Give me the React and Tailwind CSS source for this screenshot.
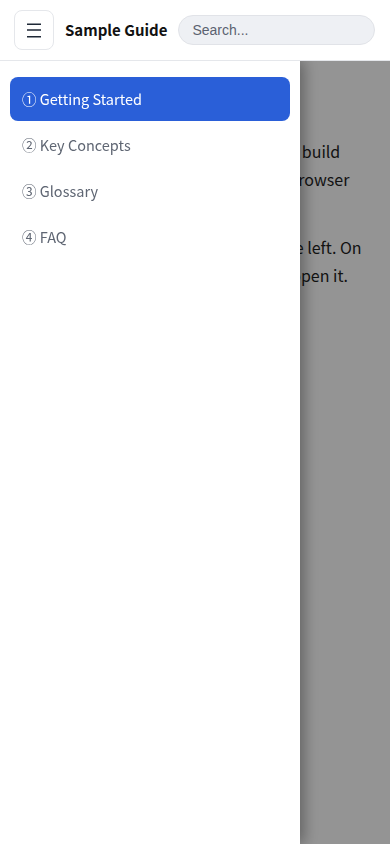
import React from "react";
import { useState } from "react";

const sections = [
  { id: 1, label: "① Getting Started" },
  { id: 2, label: "② Key Concepts" },
  { id: 3, label: "③ Glossary" },
  { id: 4, label: "④ FAQ" },
];

const App = () => {
  const [open, setOpen] = useState(true);
  const [active, setActive] = useState(1);

  return (
    <div className="min-h-[844px] bg-white text-[#1f1f1f] font-['Noto_Sans_CJK_SC',sans-serif]">
      <header className="relative z-30 flex h-[61px] items-center gap-[11px] border-b border-[#e5e7eb] bg-white pl-[14px] pr-[15px]">
        <button
          onClick={() => setOpen(!open)}
          className="flex h-10 w-10 shrink-0 items-center justify-center rounded-lg border border-[#e5e7eb] bg-white"
        >
          <svg width="16" height="16" viewBox="0 0 16 16" fill="none">
            <path d="M1 2.3h14M1 8h14M1 14.7h14" stroke="#1f2937" strokeWidth="1.4" />
          </svg>
        </button>
        <h1 className="shrink-0 text-[15px] font-bold text-[#111]">Sample Guide</h1>
        <input
          type="text"
          placeholder="Search..."
          className="h-[30px] min-w-0 flex-1 rounded-full border border-[#e1e3e8] bg-[#eef0f4] px-[13px] font-['Liberation_Sans',sans-serif] text-sm text-[#333] placeholder:text-[#5b6270] outline-none"
        />
      </header>

      <main className="px-6 pt-7">
        <h2 className="mb-4 text-2xl font-bold leading-8">Getting Started</h2>
        <p className="mb-3 text-base leading-7">
          This guide covers what you'll need to build simple docs that work well in every browser without extra setup.
        </p>
        <p className="text-base leading-7">
          Select a topic in the navigation on the left. On small screens, tap the top button to open it.
        </p>
      </main>

      {open && (
        <>
          <div
            onClick={() => setOpen(false)}
            className="fixed inset-x-0 top-[61px] bottom-0 z-10 bg-black/[0.42]"
          />
          <nav className="fixed top-[61px] bottom-0 left-0 z-20 flex w-[300px] flex-col gap-[2px] bg-white px-[10px] pt-4 shadow-[4px_0_14px_rgba(0,0,0,0.35)]">
            {sections.map((s) => (
              <a
                key={s.id}
                href="#"
                onClick={(e) => {
                  e.preventDefault();
                  setActive(s.id);
                }}
                className={
                  s.id === active
                    ? "flex h-11 items-center rounded-lg bg-[#2a5fd8] px-3 text-[14.5px] text-white"
                    : "flex h-11 items-center rounded-lg px-3 text-[14.5px] text-[#5f6673]"
                }
              >
                {s.label}
              </a>
            ))}
          </nav>
        </>
      )}
    </div>
  );
};

export default App;
